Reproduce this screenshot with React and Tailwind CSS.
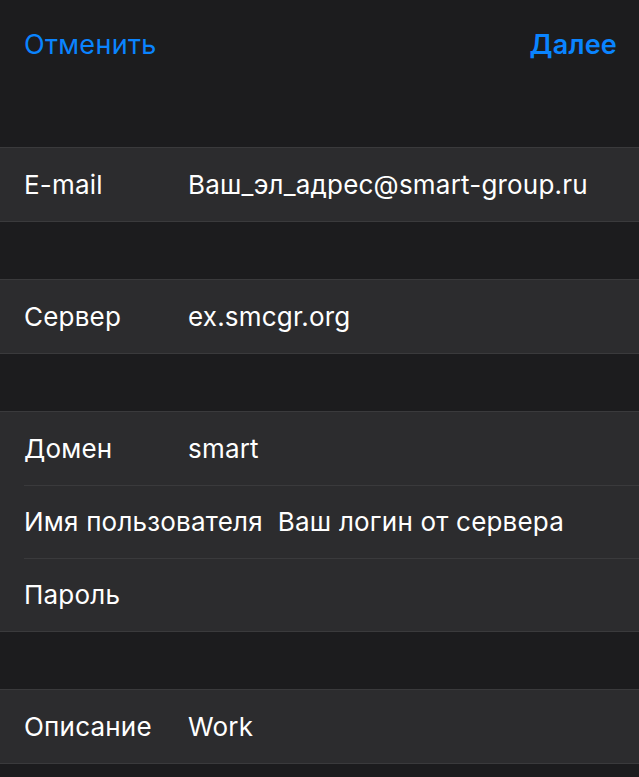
const Row = ({ label, value, inset }) => (
  <div className="flex items-center h-[73px] pl-6 relative">
    {inset && (
      <div className="absolute left-6 right-0 top-0 h-px bg-[#3a3a3c]" />
    )}
    <div className="min-w-[149px] mr-[15px] text-white whitespace-nowrap">
      {label}
    </div>
    <div className="text-white whitespace-nowrap">{value}</div>
  </div>
);

const Section = ({ children }) => (
  <div className="bg-[#2c2c2e] border-y border-[#3a3a3c]">{children}</div>
);

const App = () => {
  return (
    <div
      className="w-[639px] h-[777px] bg-[#1c1c1e] text-[26px] tracking-[0.2px] overflow-hidden"
      style={{ fontFamily: "Inter, 'Noto Sans', sans-serif" }}
    >
      <div className="flex items-center justify-between h-[91px] pl-6 pr-[22px]">
        <button className="text-[#0a84ff] text-[27px] tracking-[0.3px]">Отменить</button>
        <button className="text-[#0a84ff] text-[27px] font-semibold">Далее</button>
      </div>

      <div className="h-[56px]" />
      <Section>
        <Row label="E-mail" value="Ваш_эл_адрес@smart-group.ru" />
      </Section>

      <div className="h-[57px]" />
      <Section>
        <Row label="Сервер" value="ex.smcgr.org" />
      </Section>

      <div className="h-[57px]" />
      <Section>
        <Row label="Домен" value="smart" />
        <Row label="Имя пользователя" value="Ваш логин от сервера" inset />
        <Row label="Пароль" value="" inset />
      </Section>

      <div className="h-[57px]" />
      <Section>
        <Row label="Описание" value="Work" />
      </Section>
    </div>
  );
};

export default App;
